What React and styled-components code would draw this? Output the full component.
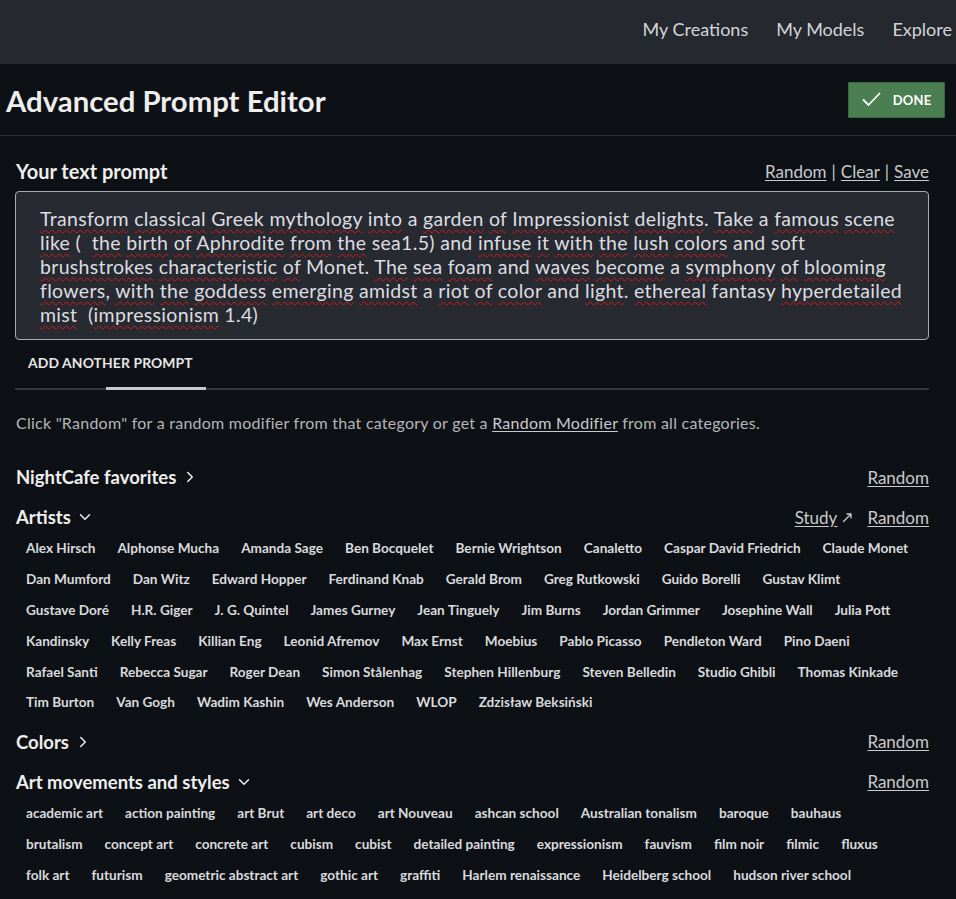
import React from "react";
import styled, { createGlobalStyle } from "styled-components";
import { ChevronRight, ChevronDown } from "lucide-react";

const FONT = `Lato, "Open Sans", "Noto Sans", sans-serif`;

const GlobalStyle = createGlobalStyle`
  html, body { margin: 0; padding: 0; background: #0d1014; }
  body { font-family: ${FONT}; color: #e6e6e6; }
  * { box-sizing: border-box; }
`;

const Page = styled.div`
  width: 956px;
  min-height: 899px;
  background: #0d1014;
  overflow: hidden;
`;

const TopNav = styled.nav`
  height: 64px;
  background: #25282e;
  display: flex;
  align-items: center;
  justify-content: flex-end;
  gap: 28px;
  padding: 0 4px 6px 0;
`;

const NavLink = styled.a`
  font-size: 18px;
  color: #d3d5d9;
  text-decoration: none;
  cursor: pointer;
`;

const TitleBar = styled.header`
  height: 72px;
  display: flex;
  align-items: center;
  justify-content: space-between;
  padding: 0 11px 0 6px;
  border-bottom: 1px solid #2a2d32;
`;

const Title = styled.h1`
  margin: 0;
  padding-top: 2px;
  font-size: 29.3px;
  font-weight: 700;
  color: #eeeeee;
`;

const DoneButton = styled.button`
  width: 97px;
  height: 36px;
  display: flex;
  align-items: center;
  justify-content: center;
  gap: 12px;
  background: #4b7f52;
  border: 1px solid #3b6842;
  border-radius: 1px;
  color: #ffffff;
  font-family: ${FONT};
  font-size: 13px;
  font-weight: 700;
  letter-spacing: 0.2px;
  cursor: pointer;
  svg { display: block; }
`;

const Main = styled.main`
  padding: 24px 27px 0 15px;
`;

const PromptHeader = styled.div`
  display: flex;
  align-items: center;
  justify-content: space-between;
  height: 22px;
  margin-bottom: 9px;
`;

const Heading = styled.h2`
  margin: 0;
  display: flex;
  align-items: center;
  gap: 5px;
  font-size: ${(p) => p.$size || 18.5}px;
  font-weight: 700;
  color: #eeeeee;
  padding-left: 1px;
`;

const LinkGroup = styled.div`
  display: flex;
  align-items: center;
  gap: ${(p) => p.$gap || 0}px;
  font-size: 17px;
  color: #c8cacd;
`;

const TextLink = styled.a`
  color: #c8cacd;
  text-decoration: underline;
  text-underline-offset: 2px;
  cursor: pointer;
  display: inline-flex;
  align-items: center;
  gap: 5px;
`;

const Sep = styled.span`
  padding: 0 5px;
`;

const PromptBox = styled.div`
  height: 149px;
  background: #272a31;
  border: 1px solid #a9abad;
  border-radius: 4px;
  padding: 15px 20px 0 24px;
  font-size: 19.5px;
  letter-spacing: 0.32px;
  line-height: 24px;
  color: #dcdde0;
`;

const PromptLine = styled.div`
  white-space: pre;
`;

const Misspelled = styled.span`
  text-decoration: underline wavy #d01818;
  text-decoration-thickness: 1px;
  text-underline-offset: 3px;
  text-decoration-skip-ink: none;
`;

const Tabs = styled.div`
  position: relative;
  height: 50px;
  border-bottom: 2px solid #34373c;
  display: flex;
  align-items: center;
  padding: 0 0 4px 13px;
`;

const Tab = styled.button`
  background: none;
  border: none;
  padding: 0;
  font-family: ${FONT};
  font-size: 13.9px;
  font-weight: 700;
  color: #e6e6e6;
  letter-spacing: 0.1px;
  text-transform: uppercase;
`;

const TabIndicator = styled.span`
  position: absolute;
  left: 91px;
  bottom: -2px;
  width: 100px;
  height: 3px;
  background: #c6c8ca;
`;

const Hint = styled.p`
  margin: 23px 0 0 1px;
  font-size: 16px;
  letter-spacing: 0.25px;
  color: #b5b7ba;
  a { color: #c8cacd; text-decoration: underline; text-underline-offset: 2px; }
`;

const Section = styled.section`
  margin-top: ${(p) => p.$top}px;
`;

const SectionHead = styled.div`
  display: flex;
  align-items: center;
  justify-content: space-between;
  height: 24px;
`;

const Chips = styled.div`
  display: flex;
  flex-wrap: wrap;
  margin-top: 4px;
  margin-bottom: 3px;
`;

const Chip = styled.button`
  height: 30.8px;
  padding: 0 11px;
  background: none;
  border: none;
  font-family: ${FONT};
  font-size: 13.6px;
  font-weight: 700;
  color: #d9dadd;
  cursor: pointer;
  white-space: nowrap;
`;

const promptLines = [
  "*Transform *classical *Greek *mythology *into a *garden *of *Impressionist *delights. *Take a *famous *scene",
  "*like (  *the *birth *of *Aphrodite *from *the sea1.5) and *infuse *it *with *the *lush *colors and soft",
  "*brushstrokes *characteristic *of Monet. *The *sea *foam and *waves *become a *symphony *of *blooming",
  "*flowers, *with *the *goddess *emerging *amidst a *riot *of *color and *light. *ethereal fantasy *hyperdetailed",
  "*mist  (*impressionism 1.4)",
];

function renderLine(line) {
  return line.split(/(\*[A-Za-z]+)/).map((t, i) =>
    t.startsWith("*") ? (
      <Misspelled key={i}>{t.slice(1)}</Misspelled>
    ) : (
      <React.Fragment key={i}>{t}</React.Fragment>
    )
  );
}

const artists = [
  "Alex Hirsch", "Alphonse Mucha", "Amanda Sage", "Ben Bocquelet", "Bernie Wrightson", "Canaletto",
  "Caspar David Friedrich", "Claude Monet", "Dan Mumford", "Dan Witz", "Edward Hopper", "Ferdinand Knab",
  "Gerald Brom", "Greg Rutkowski", "Guido Borelli", "Gustav Klimt", "Gustave Doré", "H.R. Giger",
  "J. G. Quintel", "James Gurney", "Jean Tinguely", "Jim Burns", "Jordan Grimmer", "Josephine Wall",
  "Julia Pott", "Kandinsky", "Kelly Freas", "Killian Eng", "Leonid Afremov", "Max Ernst", "Moebius",
  "Pablo Picasso", "Pendleton Ward", "Pino Daeni", "Rafael Santi", "Rebecca Sugar", "Roger Dean",
  "Simon Stålenhag", "Stephen Hillenburg", "Steven Belledin", "Studio Ghibli", "Thomas Kinkade",
  "Tim Burton", "Van Gogh", "Wadim Kashin", "Wes Anderson", "WLOP", "Zdzisław Beksiński",
];

const movements = [
  "academic art", "action painting", "art Brut", "art deco", "art Nouveau", "ashcan school",
  "Australian tonalism", "baroque", "bauhaus", "brutalism", "concept art", "concrete art", "cubism",
  "cubist", "detailed painting", "expressionism", "fauvism", "film noir", "filmic", "fluxus", "folk art",
  "futurism", "geometric abstract art", "gothic art", "graffiti", "Harlem renaissance",
  "Heidelberg school", "hudson river school",
];

const CheckIcon = () => (
  <svg width="19" height="15" viewBox="0 0 19 15" fill="none">
    <path d="M1.5 8 L6.5 13 L17.5 1.5" stroke="#ffffff" strokeWidth="1.8" strokeLinecap="round" strokeLinejoin="round" />
  </svg>
);

const ExternalArrow = () => (
  <svg width="11" height="11" viewBox="0 0 11 11" fill="none">
    <path d="M1.5 9.5 L9 2 M5 2 H9 V6" stroke="#c8cacd" strokeWidth="1.3" strokeLinecap="round" strokeLinejoin="round" />
  </svg>
);

function Category({ title, open, top, items, study }) {
  return (
    <Section $top={top}>
      <SectionHead>
        <Heading>
          {title}
          {open ? <ChevronDown size={18} strokeWidth={2} /> : <ChevronRight size={18} strokeWidth={2} />}
        </Heading>
        <LinkGroup $gap={14}>
          {study && (
            <TextLink>
              Study <ExternalArrow />
            </TextLink>
          )}
          <TextLink>Random</TextLink>
        </LinkGroup>
      </SectionHead>
      {items && (
        <Chips>
          {items.map((it) => (
            <Chip key={it}>{it}</Chip>
          ))}
        </Chips>
      )}
    </Section>
  );
}

export default function App() {
  return (
    <Page>
      <GlobalStyle />
      <TopNav>
        <NavLink>My Creations</NavLink>
        <NavLink>My Models</NavLink>
        <NavLink>Explore</NavLink>
      </TopNav>
      <TitleBar>
        <Title>Advanced Prompt Editor</Title>
        <DoneButton>
          <CheckIcon />
          DONE
        </DoneButton>
      </TitleBar>
      <Main>
        <PromptHeader>
          <Heading $size={20}>Your text prompt</Heading>
          <LinkGroup>
            <TextLink>Random</TextLink>
            <Sep>|</Sep>
            <TextLink>Clear</TextLink>
            <Sep>|</Sep>
            <TextLink>Save</TextLink>
          </LinkGroup>
        </PromptHeader>
        <PromptBox>
          {promptLines.map((l, i) => (
            <PromptLine key={i}>{renderLine(l)}</PromptLine>
          ))}
        </PromptBox>
        <Tabs>
          <Tab>Add another prompt</Tab>
          <TabIndicator />
        </Tabs>
        <Hint>
          Click "Random" for a random modifier from that category or get a <a>Random Modifier</a> from all categories.
        </Hint>
        <Category title="NightCafe favorites" top={33} />
        <Category title="Artists" open study top={16} items={artists} />
        <Category title="Colors" top={12} />
        <Category title="Art movements and styles" open top={16} items={movements} />
      </Main>
    </Page>
  );
}
